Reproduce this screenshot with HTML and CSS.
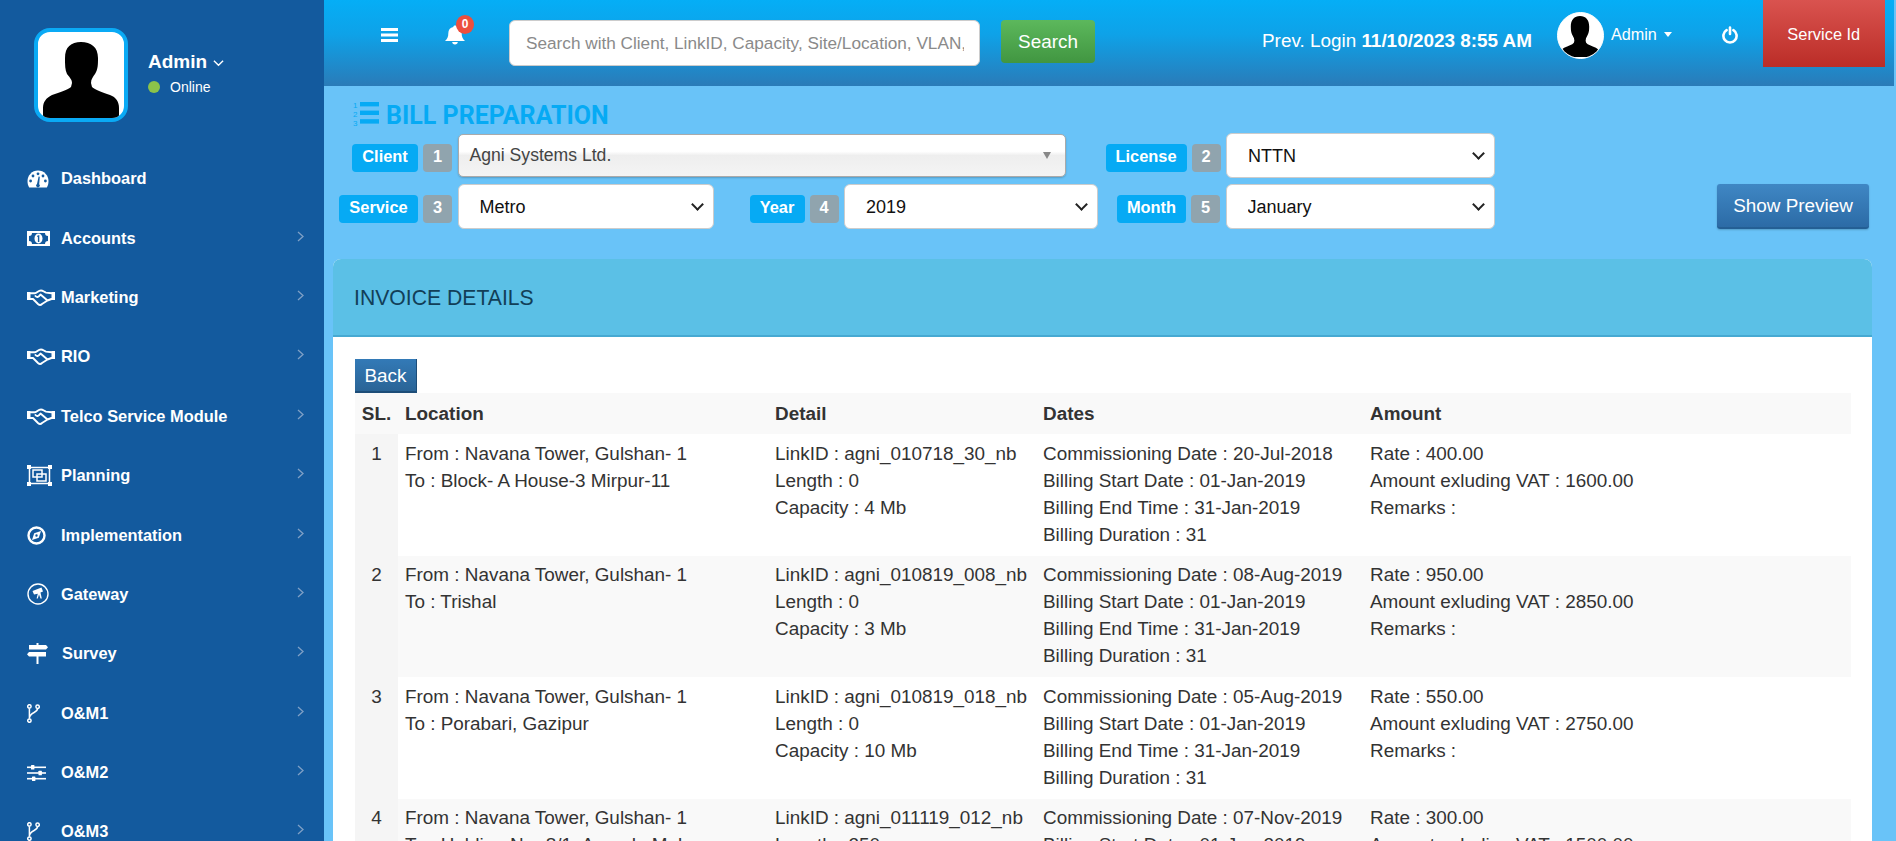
FILE: index.html
```html
<!DOCTYPE html>
<html lang="en">
<head>
  <meta charset="UTF-8">
  <title>Bill Preparation</title>
  <link rel="stylesheet" href="styles.css">
</head>
<body>
  <aside class="sidebar">
    <div class="user-panel">
      <div class="user-photo">
        <svg viewBox="0 0 86 86"><path d="M43 10C53 10 60 15 60 26C60 33 60 37 57 42C55 45 53 47 53 51L54 55C57 58 64 60 72 63C78 65 81 70 81 76V83Q81 86 77 86H9Q5 86 5 83V76C5 70 8 66 14 63C22 60 30 58 33 55L34 51C34 47 31 45 29 42C27 38 27 33 27 26C27 15 33 10 43 10Z"/></svg>
      </div>
      <div class="user-info">
        <div class="user-name">Admin
          <svg class="user-chevron" viewBox="0 0 12 8"><path d="M1 1.5L6 6.5L11 1.5"/></svg>
        </div>
        <div class="user-status"><span class="dot"></span>Online</div>
      </div>
    </div>
    <ul class="menu">
      <li>
        <svg class="menu-icon" viewBox="0 0 22 18"><path fill="#fff" d="M11 0.5C5 0.5 0.5 5.5 0.5 11C0.5 13.5 1 15.5 2.2 17.5H19.8C21 15.5 21.5 13.5 21.5 11C21.5 5.5 17 0.5 11 0.5Z"/><g fill="#135a9e"><circle cx="11" cy="3.8" r="1.4"/><circle cx="6" cy="6" r="1.4"/><circle cx="16" cy="6" r="1.4"/><circle cx="3.6" cy="11" r="1.4"/><circle cx="18.4" cy="11" r="1.4"/><path d="M10 14L11.6 6.5L12.8 6.8L12.2 14.2A1.8 1.8 0 1 1 10 14Z"/></g></svg>
        <span>Dashboard</span>
      </li>
      <li class="has-sub">
        <svg class="menu-icon ic-acc" viewBox="0 0 23 15"><path fill="#fff" fill-rule="evenodd" d="M0 0H23V15H0ZM5 2H18C18 4 19 5 21 5V10C19 10 18 11 18 13H5C5 11 4 10 2 10V5C4 5 5 4 5 2Z"/><ellipse fill="#fff" cx="11.5" cy="7.5" rx="4" ry="5"/><path fill="#135a9e" d="M10.2 4.8L12.3 4V11H10.9V5.8L10.2 6Z"/></svg>
        <span>Accounts</span>
        <svg class="sub-arrow" viewBox="0 0 7 11"><path d="M1 1L6 5.5L1 10"/></svg>
      </li>
      <li class="has-sub">
        <svg class="menu-icon hands" viewBox="0 0 28 17"><use href="#hands"/></svg>
        <span>Marketing</span>
        <svg class="sub-arrow" viewBox="0 0 7 11"><path d="M1 1L6 5.5L1 10"/></svg>
      </li>
      <li class="has-sub">
        <svg class="menu-icon hands" viewBox="0 0 28 17"><use href="#hands"/></svg>
        <span>RIO</span>
        <svg class="sub-arrow" viewBox="0 0 7 11"><path d="M1 1L6 5.5L1 10"/></svg>
      </li>
      <li class="has-sub">
        <svg class="menu-icon hands" viewBox="0 0 28 17"><use href="#hands"/></svg>
        <span>Telco Service Module</span>
        <svg class="sub-arrow" viewBox="0 0 7 11"><path d="M1 1L6 5.5L1 10"/></svg>
      </li>
      <li class="has-sub">
        <svg class="menu-icon ic-plan" viewBox="0 0 25 21"><g fill="none" stroke="#fff" stroke-width="1.5"><path d="M2.5 2.5H22.5V18.5H2.5Z"/><path d="M6 5H15V12H6Z"/><path d="M10 9H19V16H10Z"/></g><g fill="#fff"><rect width="4" height="4"/><rect x="21" width="4" height="4"/><rect y="17" width="4" height="4"/><rect x="21" y="17" width="4" height="4"/></g></svg>
        <span>Planning</span>
        <svg class="sub-arrow" viewBox="0 0 7 11"><path d="M1 1L6 5.5L1 10"/></svg>
      </li>
      <li class="has-sub">
        <svg class="menu-icon ic-comp" viewBox="0 0 19 19"><circle cx="9.5" cy="9.5" r="8" fill="none" stroke="#fff" stroke-width="2.4"/><path fill="#fff" d="M14 5L11.8 11.8L5 14L7.2 7.2ZM9.5 8.3A1.2 1.2 0 1 0 9.5 10.7A1.2 1.2 0 1 0 9.5 8.3Z"/></svg>
        <span>Implementation</span>
        <svg class="sub-arrow" viewBox="0 0 7 11"><path d="M1 1L6 5.5L1 10"/></svg>
      </li>
      <li class="has-sub">
        <svg class="menu-icon ic-gate" viewBox="0 0 22 22"><circle cx="11" cy="11" r="10" fill="none" stroke="#fff" stroke-width="1.4"/><path fill="#fff" d="M5.5 8L14.5 4.5L16 8.5L13.5 9.5L14.8 15.5H13.5L12 11.5L10.8 15.5H9.6L10.8 10.8L7 11.5Z"/></svg>
        <span>Gateway</span>
        <svg class="sub-arrow" viewBox="0 0 7 11"><path d="M1 1L6 5.5L1 10"/></svg>
      </li>
      <li class="has-sub">
        <svg class="menu-icon signs" viewBox="0 0 21 21"><path fill="#fff" d="M9.5 0H11.5V2H19L21 4.2L19 6.5H2V2H9.5ZM2 9H19V13.5H11.5V21H9.5V13.5H2L0 11.2Z"/></svg>
        <span>Survey</span>
        <svg class="sub-arrow" viewBox="0 0 7 11"><path d="M1 1L6 5.5L1 10"/></svg>
      </li>
      <li class="has-sub">
        <svg class="menu-icon fork" viewBox="0 0 13 19"><use href="#fork"/></svg>
        <span>O&amp;M1</span>
        <svg class="sub-arrow" viewBox="0 0 7 11"><path d="M1 1L6 5.5L1 10"/></svg>
      </li>
      <li class="has-sub">
        <svg class="menu-icon ic-sliders" viewBox="0 0 19 16"><g fill="#fff"><rect y="1.5" width="19" height="1.6"/><rect y="7.2" width="19" height="1.6"/><rect y="12.9" width="19" height="1.6"/><rect x="4" width="3.4" height="4.6" rx=".6"/><rect x="11.5" y="5.7" width="3.4" height="4.6" rx=".6"/><rect x="5" y="11.4" width="3.4" height="4.6" rx=".6"/></g></svg>
        <span>O&amp;M2</span>
        <svg class="sub-arrow" viewBox="0 0 7 11"><path d="M1 1L6 5.5L1 10"/></svg>
      </li>
      <li class="has-sub">
        <svg class="menu-icon fork" viewBox="0 0 13 19"><use href="#fork"/></svg>
        <span>O&amp;M3</span>
        <svg class="sub-arrow" viewBox="0 0 7 11"><path d="M1 1L6 5.5L1 10"/></svg>
      </li>
    </ul>
    <svg class="defs" width="0" height="0">
      <defs>
        <g id="hands">
          <path fill="#fff" d="M0 3H3.5V11H0ZM24.5 3H28V11H24.5Z"/>
          <path fill="none" stroke="#fff" stroke-width="1.9" stroke-linejoin="round" stroke-linecap="round" d="M3.5 4.2H8C10 4.2 11 1.5 14 1.5C16 1.5 17 3 19 3.6L24.5 4.2M3.5 10H6L11 15C12.5 16.3 14 16 15 15L20.5 11.5L24.5 10M8.5 7C10 9 12 8 13.5 5.5L20.5 11.5"/>
        </g>
        <g id="fork">
          <g fill="none" stroke="#fff" stroke-width="1.5"><circle cx="2.4" cy="2.4" r="1.7"/><circle cx="2.4" cy="16.6" r="1.7"/><circle cx="10.6" cy="2.8" r="1.7"/><path d="M2.4 4.2V14.8M10.6 4.6C10.6 9 3 8 2.4 14"/></g>
        </g>
      </defs>
    </svg>
  </aside>

  <main class="main">
    <header class="topbar">
      <svg class="burger" viewBox="0 0 17 14"><path fill="#fff" d="M0 0H17V3H0ZM0 5.5H17V8.5H0ZM0 11H17V14H0Z"/></svg>
      <div class="bell">
        <svg viewBox="0 0 18 20" preserveAspectRatio="none"><path fill="#fff" d="M9 0.5C10 0.5 10.5 1 10.5 2C13.5 2.6 15 5 15 8C15 12 16 14 18 16H0C2 14 3 12 3 8C3 5 4.5 2.6 7.5 2C7.5 1 8 0.5 9 0.5ZM6.5 17H11.5C11.5 18.5 10.5 19.5 9 19.5C7.5 19.5 6.5 18.5 6.5 17Z"/></svg>
        <span class="bell-count">0</span>
      </div>
      <input class="search-input" type="text" placeholder="Search with Client, LinkID, Capacity, Site/Location, VLAN, IP">
      <button class="search-btn" type="button">Search</button>
      <div class="prev-login">Prev. Login <b>11/10/2023 8:55 AM</b></div>
      <div class="top-avatar">
        <svg viewBox="0 0 86 86"><path d="M43 6C54 6 61 13 61 27C61 35 60 40 57 45C55 48 54 51 54 54L55 58C58 62 66 64 74 68C80 71 84 78 85 86H1C2 78 6 71 12 68C20 64 28 62 31 58L32 54C32 51 31 48 29 45C26 40 25 35 25 27C25 13 32 6 43 6Z"/></svg>
      </div>
      <div class="top-user">Admin<span class="caret"></span></div>
      <svg class="power" viewBox="0 0 16 18"><path fill="none" stroke="#fff" stroke-width="2.6" stroke-linecap="round" d="M4.6 4.2A6.6 6.6 0 1 0 11.4 4.2M8 1.5V8"/></svg>
      <button class="service-btn" type="button">Service Id</button>
    </header>

    <div class="content">
      <h1 class="page-title">
        <svg class="title-icon" viewBox="0 0 26 26"><g fill="#06aaf4"><rect x="7" y="2" width="19" height="4.4"/><rect x="7" y="10.6" width="19" height="4.4"/><rect x="7" y="19.2" width="19" height="4.4"/><text x="0" y="7.5" class="title-num">1</text><text x="0" y="16.5" class="title-num">2</text><text x="0" y="25.5" class="title-num">3</text></g></svg>
        BILL PREPARATION
      </h1>

      <form class="bill-form">
        <div class="form-row row-first">
          <div class="field field-client">
            <label class="tag">Client</label><span class="num">1</span>
            <div class="chosen"><span>Agni Systems Ltd.</span><i class="chosen-arrow"></i></div>
          </div>
          <div class="field field-license">
            <label class="tag">License</label><span class="num">2</span>
            <div class="sel-wrap"><select class="sel"><option>NTTN</option></select></div>
          </div>
        </div>
        <div class="form-row">
          <div class="field field-service">
            <label class="tag">Service</label><span class="num">3</span>
            <div class="sel-wrap"><select class="sel"><option>Metro</option></select></div>
          </div>
          <div class="field field-year">
            <label class="tag">Year</label><span class="num">4</span>
            <div class="sel-wrap"><select class="sel"><option>2019</option></select></div>
          </div>
          <div class="field field-month">
            <label class="tag">Month</label><span class="num">5</span>
            <div class="sel-wrap"><select class="sel"><option>January</option></select></div>
          </div>
          <button class="preview-btn" type="button">Show Preview</button>
        </div>
      </form>

      <section class="panel">
        <div class="panel-heading">INVOICE DETAILS</div>
        <div class="panel-body">
          <button class="back-btn" type="button">Back</button>
          <table class="invoice">
            <colgroup>
              <col class="c-sl"><col class="c-loc"><col class="c-det"><col class="c-dat"><col>
            </colgroup>
            <thead>
              <tr><th class="sl">SL.</th><th>Location</th><th>Detail</th><th>Dates</th><th>Amount</th></tr>
            </thead>
            <tbody>
              <tr>
                <td class="sl">1</td>
                <td>From : Navana Tower, Gulshan- 1<br>To : Block- A House-3 Mirpur-11</td>
                <td>LinkID : agni_010718_30_nb<br>Length : 0<br>Capacity : 4 Mb</td>
                <td>Commissioning Date : 20-Jul-2018<br>Billing Start Date : 01-Jan-2019<br>Billing End Time : 31-Jan-2019<br>Billing Duration : 31</td>
                <td>Rate : 400.00<br>Amount exluding VAT : 1600.00<br>Remarks :</td>
              </tr>
              <tr>
                <td class="sl">2</td>
                <td>From : Navana Tower, Gulshan- 1<br>To : Trishal</td>
                <td>LinkID : agni_010819_008_nb<br>Length : 0<br>Capacity : 3 Mb</td>
                <td>Commissioning Date : 08-Aug-2019<br>Billing Start Date : 01-Jan-2019<br>Billing End Time : 31-Jan-2019<br>Billing Duration : 31</td>
                <td>Rate : 950.00<br>Amount exluding VAT : 2850.00<br>Remarks :</td>
              </tr>
              <tr>
                <td class="sl">3</td>
                <td>From : Navana Tower, Gulshan- 1<br>To : Porabari, Gazipur</td>
                <td>LinkID : agni_010819_018_nb<br>Length : 0<br>Capacity : 10 Mb</td>
                <td>Commissioning Date : 05-Aug-2019<br>Billing Start Date : 01-Jan-2019<br>Billing End Time : 31-Jan-2019<br>Billing Duration : 31</td>
                <td>Rate : 550.00<br>Amount exluding VAT : 2750.00<br>Remarks :</td>
              </tr>
              <tr>
                <td class="sl">4</td>
                <td>From : Navana Tower, Gulshan- 1<br>To : Holding No- 8/1, Ananda Mol</td>
                <td>LinkID : agni_011119_012_nb<br>Length : 250<br>Capacity : 2 Mb</td>
                <td>Commissioning Date : 07-Nov-2019<br>Billing Start Date : 01-Jan-2019<br>Billing End Time : 31-Jan-2019<br>Billing Duration : 31</td>
                <td>Rate : 300.00<br>Amount exluding VAT : 1500.00<br>Remarks :</td>
              </tr>
            </tbody>
          </table>
        </div>
      </section>
    </div>
  </main>
</body>
</html>
```

FILE: styles.css
```css
* { box-sizing: border-box; }
html, body { height: 841px; overflow: hidden; }
body { margin: 0; display: flex; background: #69c3f8; color: #333; font-family: "Liberation Sans", Arial, sans-serif; font-size: 18.9px; }

/* sidebar */
.sidebar { flex: 0 0 324px; height: 841px; background: #135a9e; color: #fff; overflow: hidden; }
.user-panel { display: flex; align-items: center; height: 149px; padding: 0 0 0 34px; }
.user-photo { width: 94px; height: 94px; background: #fff; border: 4px solid #0aaaf5; border-radius: 16px; overflow: hidden; }
.user-photo svg { display: block; width: 86px; height: 86px; }
.user-info { margin: -5px 0 0 20px; }
.user-name { font-size: 19px; font-weight: bold; line-height: 24px; display: flex; align-items: center; }
.user-chevron { width: 11px; height: 8px; margin: 2px 0 0 6px; fill: none; stroke: #fff; stroke-width: 1.5; }
.user-status { display: flex; align-items: center; margin-top: 5px; font-size: 14px; line-height: 16px; }
.dot { width: 12px; height: 12px; margin-right: 10px; border-radius: 50%; background: #8bc34a; }
.menu { list-style: none; margin: 0; padding: 0 20px 0 27px; }
.menu li { display: flex; align-items: center; height: 59.4px; font-size: 16.4px; font-weight: bold; }
.menu-icon { width: 22px; height: 18px; margin-right: 12px; flex: none; }
.menu-icon.ic-acc { width: 23px; height: 15px; margin-right: 11px; }
.menu-icon.hands { width: 28px; height: 17px; margin-right: 6px; }
.menu-icon.ic-plan { width: 25px; height: 21px; margin-right: 9px; }
.menu-icon.ic-comp { width: 19px; height: 19px; margin-right: 15px; }
.menu-icon.ic-gate { width: 22px; height: 22px; margin-right: 12px; }
.menu-icon.signs { width: 21px; height: 21px; margin-right: 14px; }
.menu-icon.fork { width: 13px; height: 19px; margin-right: 21px; }
.menu-icon.ic-sliders { width: 19px; height: 16px; margin-right: 15px; }
.sub-arrow { width: 7px; height: 11px; margin: -4px 0 0 auto; fill: none; stroke: #7fa0c6; stroke-width: 1.3; }
.defs { position: absolute; }

/* top bar */
.main { flex: 1; min-width: 0; height: 841px; }
.topbar { display: flex; align-items: center; height: 86px; margin-right: 2px; padding-bottom: 16px; background: linear-gradient(#05aef6, #0ea2e8 40%, #2a7bb8); color: #fff; }
.burger { width: 17px; height: 14px; margin: 0 0 0 57px; flex: none; }
.bell { position: relative; width: 20px; height: 20px; margin: 0 0 0 47px; flex: none; }
.bell svg { display: block; width: 20px; height: 20px; }
.bell-count { position: absolute; top: -10px; left: 11px; width: 18px; height: 19px; border-radius: 50%; background: #ec4f3e; font-size: 12px; font-weight: bold; line-height: 19px; text-align: center; }
.search-input { width: 471px; height: 46px; margin: 16px 0 0 44px; padding: 0 15px 0 16px; flex: none; border: 1px solid #ccc; border-radius: 6px; background: #fff; font: 17.2px "Liberation Sans", Arial, sans-serif; color: #555; }
.search-input::placeholder { color: #8a8a8a; }
.search-btn { width: 94px; height: 43px; margin: 13px 0 0 21px; flex: none; border: 0; border-radius: 4px; background: linear-gradient(#5cb85c, #419641); color: #fff; font: 18.9px "Liberation Sans", Arial, sans-serif; }
.prev-login { margin: 11px 0 0 167px; font-size: 18.9px; white-space: nowrap; }
.top-avatar { width: 47px; height: 47px; margin: 0 0 0 25px; flex: none; border: 1.5px solid #fff; border-radius: 50%; background: #fff; overflow: hidden; }
.top-avatar svg { display: block; width: 44px; height: 44px; }
.top-user { display: flex; align-items: center; margin: -2px 0 0 7px; font-size: 16.2px; }
.caret { margin-left: 7px; border-top: 5px solid #fff; border-left: 4.5px solid transparent; border-right: 4.5px solid transparent; }
.power { width: 16px; height: 18px; margin-left: 50px; flex: none; }
.service-btn { align-self: flex-start; width: 122px; height: 67px; margin-left: 25px; padding-top: 3px; border: 0; background: linear-gradient(#d9534f, #bb2d27); color: #fff; font: 16.4px "Liberation Sans", Arial, sans-serif; }

/* form */
.content { padding: 0 24px 0 8px; }
.page-title { display: flex; align-items: center; height: 48px; margin: 0 0 0 21px; padding-top: 10px; color: #06aaf4; font: bold 25px Roboto, sans-serif; }
.title-icon { width: 26px; height: 26px; margin: -4px 7px 0 0; }
.title-num { font: 8px "Liberation Sans", sans-serif; }
.form-row { display: flex; align-items: center; height: 45px; margin-bottom: 6px; }
.row-first { height: 43px; margin-bottom: 7px; }
.field { display: flex; align-items: center; flex: none; }
.tag { display: block; height: 28px; margin-top: 4px; border-radius: 4px; background: #06aaf4; color: #fff; font-size: 16.4px; font-weight: bold; line-height: 24px; text-align: center; }
.num { width: 29px; height: 28px; margin: 4px 5.5px 0 5px; border-radius: 4px; background: #90a4ae; color: #fff; font-size: 16.4px; font-weight: bold; line-height: 24px; text-align: center; }
.sel-wrap { position: relative; }
.sel-wrap::after { content: ""; position: absolute; top: 16px; right: 12px; width: 7px; height: 7px; border-right: 2px solid #222; border-bottom: 2px solid #222; transform: rotate(45deg); }
.sel { display: block; width: 100%; height: 45px; padding: 0 16px 0 21px; border: 1px solid #ccc; border-radius: 6px; background: #fff; color: #111; font: 18px "Liberation Sans", Arial, sans-serif; appearance: none; }
.field-client { margin-left: 20px; }
.field-client .tag { width: 66px; }
.chosen { display: flex; align-items: center; justify-content: space-between; width: 608px; height: 43px; padding: 0 14px 0 11px; border: 1px solid #aaa; border-radius: 5px; background: linear-gradient(#fff 40%, #eee 50%, #f4f4f4); box-shadow: 0 1px 2px rgba(0,0,0,.2); color: #444; font-size: 17.6px; }
.chosen-arrow { border-top: 7px solid #888; border-left: 4.5px solid transparent; border-right: 4.5px solid transparent; }
.field-license { margin-left: 40px; }
.field-license .tag { width: 81px; }
.field-license .sel-wrap { width: 268.5px; }
.field-service { margin-left: 7px; }
.field-service .tag { width: 79px; }
.field-service .sel-wrap { width: 256px; }
.field-year { margin-left: 36px; }
.field-year .tag { width: 55px; }
.field-year .sel-wrap { width: 254px; }
.field-month { margin-left: 19px; }
.field-month .tag { width: 69px; }
.field-month .sel-wrap { width: 269.5px; }
.preview-btn { width: 152px; height: 45px; margin-left: 222px; border: 0; border-bottom: 2px solid #245f94; border-radius: 3px; background: linear-gradient(#3f87c4, #2c6ba6); color: #fff; font: 18.9px "Liberation Sans", Arial, sans-serif; box-shadow: 0 1px 2px rgba(0,0,0,.2); }

/* invoice panel */
.panel { margin: 30px 0 0 1px; background: #fff; border-radius: 8px 8px 0 0; }
.panel-heading { height: 78px; padding-left: 21px; border-bottom: 2px solid #46a9d2; border-radius: 8px 8px 0 0; background: #5bc0e6; color: #123f58; font-size: 21.2px; line-height: 78px; }
.panel-body { padding: 22px 21px 0 22px; }
.back-btn { display: block; width: 62px; height: 34px; padding: 1px 0 0; border: 0; border-bottom: 2px solid #1d4d78; border-right: 1px solid #1d4d78; background: linear-gradient(#337ab7, #2a6496); color: #fff; font: 18.9px "Liberation Sans", Arial, sans-serif; }
.invoice { width: 100%; border-collapse: collapse; table-layout: fixed; line-height: 27px; }
.c-sl { width: 43px; }
.c-loc { width: 370px; }
.c-det { width: 268px; }
.c-dat { width: 327px; }
.invoice th { height: 41px; padding: 0 7px; background: #f9f9f9; font-weight: bold; text-align: left; }
.invoice td { height: 121.5px; padding: 5.75px 7px 7.75px; vertical-align: top; white-space: nowrap; }
.invoice tbody tr:nth-child(even) td { background: #f9f9f9; }
.invoice th.sl { text-align: center; padding: 0; }
.invoice td.sl, .invoice tbody tr:nth-child(even) td.sl { background: #f5f5f5; text-align: center; padding-left: 0; padding-right: 0; }
```
